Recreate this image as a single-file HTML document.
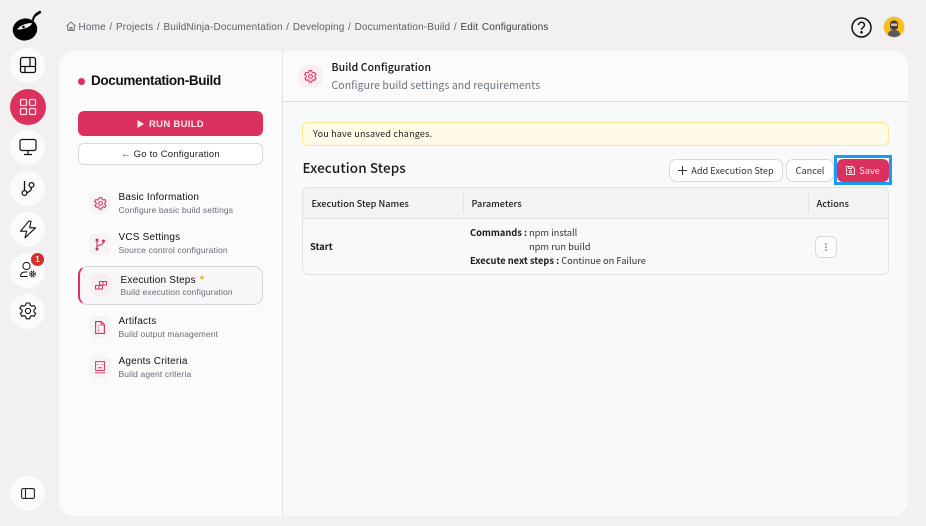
<!DOCTYPE html>
<html><head><meta charset="utf-8"><style>
*{box-sizing:border-box}
html,body{margin:0;padding:0}
body{width:926px;height:526px;background:#f2f0f0;position:relative;overflow:hidden;font-family:"Liberation Sans",sans-serif;color:#111}
.a{position:absolute;white-space:nowrap}
.n{font-family:"Noto Sans CJK SC","Liberation Sans",sans-serif}
.c{position:absolute;left:10px;width:35px;height:35px;border-radius:50%;background:#fbfbfb;display:flex;align-items:center;justify-content:center}
.c svg{display:block}
.ib{position:absolute;width:22px;height:22px;border-radius:7px;background:#f6f4f5;display:flex;align-items:center;justify-content:center}
.t{font-size:10px;letter-spacing:.2px;color:#111;line-height:12px}
.s{font-size:8.5px;letter-spacing:.12px;color:#666b75;line-height:11px}
.btn{position:absolute;background:#fff;border:1px solid #d9d9d9;border-radius:6px;display:flex;align-items:center;justify-content:center;white-space:nowrap}
.up{padding-bottom:2px}
.h{font-size:9.200px;line-height:14px;font-weight:500;color:#222}
.r{font-size:9.300px;line-height:14px;color:#333}
</style></head><body>

<svg class="a" style="left:11px;top:8px" width="34" height="34" viewBox="0 0 34 34"><path d="M29 2.500l1.500 2-5 3.500c-1.500 1-2.500 3-2.500 5l-2-1c.3-2.500 2-5.500 4-7z" fill="#000"/><ellipse cx="14" cy="21.500" rx="12.300" ry="11" fill="#000" transform="rotate(-14 14 21.500)"/><path d="M6 21.500c3-4.500 10-6.500 15-6.500-1 3.500-7 6.500-15 6.500z" fill="#f2f0f0"/><circle cx="12.500" cy="19" r="1.300" fill="#000"/></svg>

<div class="c" style="top:47.500px"><svg width="18" height="18" viewBox="0 0 18 18" fill="none" stroke="#111" stroke-width="1.300"><rect x="1.500" y="1.500" width="15" height="15" rx="2"/><path d="M1.500 10.500h15M6 10.500v6M11 1.500v9"/></svg></div>
<div class="c" style="left:9.500px;width:36px;height:36px;top:88.500px;background:#dc315e"><svg width="18" height="18" viewBox="0 0 18 18" fill="none" stroke="#fbdbe4" stroke-width="1.300"><rect x="1.500" y="1.500" width="6" height="6" rx="1"/><rect x="10.500" y="1.500" width="6" height="6" rx="1"/><rect x="1.500" y="10.500" width="6" height="6" rx="1"/><rect x="10.500" y="10.500" width="6" height="6" rx="1"/></svg></div>
<div class="c" style="top:129.500px"><svg width="18" height="18" viewBox="0 0 18 18" fill="none" stroke="#111" stroke-width="1.200"><rect x="1" y="1.500" width="16" height="11" rx="2"/><path d="M9 12.500v4M5 16.500h8"/></svg></div>
<div class="c" style="top:170.500px"><svg width="16" height="17" viewBox="0 0 16 17" fill="none" stroke="#111" stroke-width="1.300"><circle cx="4.500" cy="13" r="2.400"/><circle cx="11.500" cy="5" r="2.400"/><path d="M4.500 10.600V1M11.500 7.500c0 3-2.500 4.500-5 5.500"/></svg></div>
<div class="c" style="top:211.500px"><svg width="18" height="20" viewBox="0 0 18 20" fill="none" stroke="#111" stroke-width="1.100" stroke-linejoin="round"><path d="M9.800 2.200L1.500 12.200h6.200L6 18.800 16.500 8.800h-5.800l1.300-6.600z"/></svg></div>
<div class="c" style="top:252.500px"><svg width="18" height="18" viewBox="0 0 18 18" fill="none" stroke="#111" stroke-width="1"><circle cx="7.500" cy="5" r="3.600"/><path d="M1.500 15.500c0-3 2-4.500 5-4.500h2M1.500 15.500h7"/><circle cx="13.500" cy="13" r="1.300"/><circle cx="13.500" cy="13" r="2.800" stroke-dasharray="1.300 .9" stroke-width="1.200"/></svg></div>
<div class="a" style="left:31px;top:253px;width:13px;height:13px;border-radius:50%;background:#d32f2f;color:#fff;font-size:8px;font-weight:bold;line-height:13px;text-align:center">1</div>
<div class="c" style="top:293.500px"><svg width="18" height="18" viewBox="0 0 18 18" fill="none" stroke="#111" stroke-width="1.100" stroke-linejoin="round"><path d="M7.300 1h3.400l.5 2.300 1.500.9 2.300-.7 1.700 2.900-1.800 1.600v1.800l1.800 1.600-1.700 2.900-2.300-.7-1.500.9-.5 2.300H7.300l-.5-2.300-1.500-.9-2.300.7-1.700-2.900 1.800-1.600V8L.8 6.400l1.700-2.900 2.300.7 1.500-.9z"/><circle cx="9" cy="9" r="2.600"/></svg></div>
<div class="c" style="top:475.500px"><svg width="14" height="11" viewBox="0 0 14 11" fill="none" stroke="#222" stroke-width="1.100"><rect x=".6" y=".6" width="12.800" height="9.800" rx="1.500"/><path d="M4.500 .6v9.800"/></svg></div>

<svg class="a" style="left:66px;top:21px" width="10" height="10" viewBox="0 0 10 10" fill="none" stroke="#555" stroke-width=".8"><path d="M.5 5L5 1l4.500 4M1.800 4.500v4.800h6.400V4.500M4 9.300V6.500h2v2.800"/></svg>
<div class="a" style="left:78.500px;top:21.500px;font-size:10px;line-height:12px;letter-spacing:.15px;word-spacing:.7px;color:#5b6169">Home / Projects / BuildNinja-Documentation / Developing / Documentation-Build / <span style="color:#3a3f47">Edit Configurations</span></div>

<svg class="a" style="left:851px;top:17px" width="21" height="21" viewBox="0 0 21 21" fill="none" stroke="#111" stroke-width="1.500"><circle cx="10.500" cy="10.500" r="9.500"/><path d="M7.500 8.300c0-1.800 1.400-3 3-3s3 1.100 3 2.800c0 2.300-3 2.400-3 4.600"/><circle cx="10.500" cy="15.300" r=".6" fill="#111"/></svg>
<svg class="a" style="left:883px;top:16px" width="22" height="22" viewBox="0 0 22 22"><circle cx="11" cy="11" r="10.500" fill="#fdbd13" stroke="#ddd" stroke-width="1"/><path d="M5 19c0-3.500 2.500-5 6-5s6 1.500 6 5a10 10 0 0 1-12 0z" fill="#555a60"/><rect x="7" y="4.500" width="8" height="9.500" rx="3.500" fill="#3c4046"/><rect x="8" y="7.500" width="6" height="2.500" fill="#f0b79a"/></svg>

<div class="a" style="left:59px;top:51px;width:849px;height:465px;border-radius:15px;background:#fbfbfb;overflow:hidden">
  <div class="a" style="left:223px;top:0;width:626px;height:465px;background:#f8f9fb;border-left:1px solid #e3e3e3"></div>
  <div class="a" style="left:223px;top:0;width:626px;height:51px;background:#fbfbfb;border-left:1px solid #e3e3e3;border-bottom:1px solid #dcdcdc"></div>
</div>

<div class="a" style="left:78px;top:78px;width:7px;height:7px;border-radius:50%;background:#dc315e"></div>
<div class="a" style="left:91px;top:72px;font-size:13.500px;line-height:17px;font-weight:bold;color:#111;letter-spacing:-.35px">Documentation-Build</div>

<div class="a" style="left:78px;top:111px;width:185px;height:25px;border-radius:6px;background:#dc315e;color:#fde8ee;display:flex;align-items:center;justify-content:center;font-size:9.500px;font-weight:bold;letter-spacing:.3px;padding-top:1px"><svg width="7" height="8" viewBox="0 0 7 8" style="margin-right:5px"><path d="M.5 0v8L7 4z" fill="#fde8ee"/></svg>RUN BUILD</div>
<div class="btn" style="left:78px;top:143px;width:185px;height:22px;font-size:9.500px;letter-spacing:.2px;color:#222">← Go to Configuration</div>

<div class="ib" style="left:89px;top:192px"><svg width="13" height="13" viewBox="0 0 18 18" fill="none" stroke="#dc315e" stroke-width="1.500" stroke-linejoin="round"><path d="M7.300 1h3.400l.5 2.300 1.500.9 2.300-.7 1.700 2.900-1.800 1.600v1.800l1.800 1.600-1.700 2.900-2.300-.7-1.500.9-.5 2.300H7.300l-.5-2.300-1.500-.9-2.300.7-1.700-2.900 1.800-1.600V8L.8 6.400l1.700-2.900 2.300.7 1.500-.9z"/><circle cx="9" cy="9" r="2.600"/></svg></div>
<div class="a t" style="left:118.500px;top:192px">Basic Information</div>
<div class="a s" style="left:118.500px;top:205px">Configure basic build settings</div>

<div class="ib" style="left:89px;top:233px"><svg width="12" height="13" viewBox="0 0 12 13" fill="none" stroke="#dc315e" stroke-width="1.100"><path d="M3 2v9M9.500 3.500C9.500 6.500 6.500 7 3.500 8"/><circle cx="3" cy="2" r="1" fill="#dc315e"/><circle cx="3" cy="11" r="1" fill="#dc315e"/><circle cx="9.500" cy="3" r="1" fill="#dc315e"/></svg></div>
<div class="a t" style="left:118.500px;top:232px">VCS Settings</div>
<div class="a s" style="left:118.500px;top:245px">Source control configuration</div>

<div class="a" style="left:78px;top:266px;width:185px;height:39px;border-radius:9px;background:#f7f7fa;border:1px solid #d6d6da;border-left:2px solid #dc315e"></div>
<div class="ib" style="left:90px;top:274px;background:#f8eff3"><svg width="12" height="9" viewBox="0 0 12 9" fill="none" stroke="#dc315e" stroke-width="1"><path d="M4.500 .5h7v3.500h-7zM8 .5V4M.5 4.500h7V8H.5zM4 4.500V8"/></svg></div>
<div class="a t" style="left:120.500px;top:274px">Execution Steps <span style="color:#f5a623;margin-left:1px;font-weight:bold;font-size:11px">*</span></div>
<div class="a s" style="left:120.500px;top:287px">Build execution configuration</div>

<div class="ib" style="left:89px;top:316px"><svg width="10" height="13" viewBox="0 0 10 13" fill="none" stroke="#dc315e" stroke-width="1.100"><path d="M.6.6h5.800L9.400 3.600v8.800H.6zM6 .6V4h3.400"/><path d="M3 4.500h1M3 7h1M3 9.500h1" stroke-width="1"/></svg></div>
<div class="a t" style="left:118.500px;top:316px">Artifacts</div>
<div class="a s" style="left:118.500px;top:329px">Build output management</div>

<div class="ib" style="left:89px;top:356px"><svg width="10" height="13" viewBox="0 0 10 13" fill="none" stroke="#dc315e" stroke-width="1"><rect x=".6" y=".6" width="8.800" height="8.800"/><path d="M0 11.800h10" stroke-width="1.300" opacity=".7"/><path d="M2.500 3.500h1M6.500 3.500h1M3 6.800h4"/></svg></div>
<div class="a t" style="left:118.500px;top:356px">Agents Criteria</div>
<div class="a s" style="left:118.500px;top:369px">Build agent criteria</div>

<div class="a" style="left:299px;top:65px;width:23px;height:23px;border-radius:7px;background:#fbeef2;display:flex;align-items:center;justify-content:center"><svg width="13" height="13" viewBox="0 0 18 18" fill="none" stroke="#dc315e" stroke-width="1.500" stroke-linejoin="round"><path d="M7.300 1h3.400l.5 2.300 1.500.9 2.300-.7 1.700 2.900-1.800 1.600v1.800l1.800 1.600-1.700 2.900-2.300-.7-1.500.9-.5 2.300H7.300l-.5-2.300-1.500-.9-2.300.7-1.700-2.900 1.800-1.600V8L.8 6.400l1.700-2.900 2.300.7 1.500-.9z"/><circle cx="9" cy="9" r="2.600"/></svg></div>
<div class="a n" style="left:331.500px;top:61px;font-size:10.500px;line-height:14px;font-weight:500;color:#111;letter-spacing:.1px">Build Configuration</div>
<div class="a n" style="left:331.500px;top:79px;font-size:10.500px;line-height:14px;color:#6b7280;letter-spacing:.07px">Configure build settings and requirements</div>

<div class="a n" style="left:302px;top:122px;width:587px;height:24px;border-radius:6px;background:#fffbe6;border:1px solid #fde58f;padding-left:10px;font-size:9px;line-height:21px;color:#222;letter-spacing:.2px">You have unsaved changes.</div>

<div class="a n" style="left:302.500px;top:159px;font-size:13.500px;line-height:17px;font-weight:500;color:#1a1a1a;letter-spacing:.1px">Execution Steps</div>

<div class="btn n up" style="left:669px;top:159px;width:114px;height:23px;font-size:9.200px;color:#333;border-radius:7px"><svg width="9" height="9" viewBox="0 0 9 9" style="margin-right:4px;margin-top:2px" stroke="#333" stroke-width="1"><path d="M4.500 0v9M0 4.500h9"/></svg>Add Execution Step</div>
<div class="btn n up" style="left:786px;top:159px;width:48px;height:23px;font-size:9.200px;color:#333;border-radius:7px">Cancel</div>
<div class="a" style="left:834px;top:155px;width:58px;height:30px;border:3px solid #1e9bf0;background:#fff"></div>
<div class="a n up" style="left:837px;top:159px;width:52px;height:23px;background:#dc315e;border-radius:6px;color:#fde8ee;font-size:9.200px;display:flex;align-items:center;justify-content:center"><svg width="9" height="9" viewBox="0 0 9 9" fill="none" stroke="#fde8ee" stroke-width=".9" style="margin-right:4px;margin-top:2px"><path d="M.5.500h6l2 2v6h-8zM2.500.500v2h3v-2"/><circle cx="4.500" cy="5.800" r="1.200"/></svg>Save</div>

<div class="a" style="left:302px;top:187px;width:587px;height:88px;border:1px solid #e2e2e2;border-radius:6px;background:#f8f9fb;overflow:hidden">
  <div class="a" style="left:0;top:0;width:585px;height:31px;background:#f4f2f2;border-bottom:1px solid #e2e2e2"></div>
  <div class="a" style="left:160px;top:5px;width:1px;height:20px;background:#e2e2e2"></div>
  <div class="a" style="left:505px;top:5px;width:1px;height:20px;background:#e2e2e2"></div>
</div>
<div class="a n h" style="left:311.500px;top:196px">Execution Step Names</div>
<div class="a n h" style="left:471.500px;top:196px">Parameters</div>
<div class="a n h" style="left:816.500px;top:196px">Actions</div>

<div class="a n r" style="left:310px;top:239px;font-weight:700;color:#1a1a1a">Start</div>
<div class="a n r" style="left:470px;top:225px"><b style="color:#1a1a1a">Commands :</b></div>
<div class="a n r" style="left:529px;top:225px">npm install</div>
<div class="a n r" style="left:529px;top:239px">npm run build</div>
<div class="a n r" style="left:470px;top:253px"><b style="color:#1a1a1a">Execute next steps :</b> Continue on Failure</div>

<div class="btn" style="left:815px;top:236px;width:22px;height:22px;border-radius:6px;background:#fbfbfb"><svg width="2" height="8" viewBox="0 0 2 8"><circle cx="1" cy="1" r=".8" fill="#555"/><circle cx="1" cy="4" r=".8" fill="#555"/><circle cx="1" cy="7" r=".8" fill="#555"/></svg></div>

</body></html>
